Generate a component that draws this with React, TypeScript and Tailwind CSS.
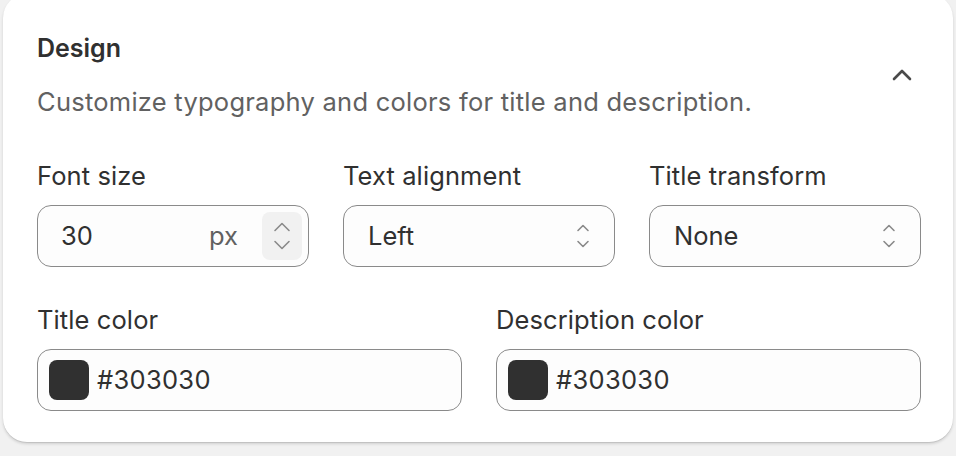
import React from 'react'

const font = { fontFamily: 'Inter, "Noto Sans", sans-serif' }

function UpDown({ className = '' }: { className?: string }) {
  return (
    <svg viewBox="0 0 16 26" className={className} fill="none" stroke="currentColor" strokeWidth={1.6} strokeLinecap="round" strokeLinejoin="round">
      <path d="M3 7.5 8 2.5l5 5" />
      <path d="M3 18.5l5 5 5-5" />
    </svg>
  )
}

function Chevron({ dir }: { dir: 'up' | 'down' }) {
  return (
    <svg viewBox="0 0 18 10" className="h-[10px] w-[18px]" fill="none" stroke="currentColor" strokeWidth={1.6} strokeLinecap="round" strokeLinejoin="round">
      {dir === 'up' ? <path d="M2 8.5 9 1.5l7 7" /> : <path d="M2 1.5l7 7 7-7" />}
    </svg>
  )
}

function Label({ children }: { children: React.ReactNode }) {
  return <div className="h-[32px] text-[25.5px] leading-[32px] tracking-[0.1px] text-[#303030]">{children}</div>
}

function SelectField({ label, value }: { label: string; value: string }) {
  return (
    <div className="flex flex-col gap-[13px]">
      <Label>{label}</Label>
      <div className="flex h-[62px] items-center justify-between rounded-[14px] border border-[#8a8a8a] bg-[#fdfdfd] pl-[24px] pr-[23px]">
        <span className="text-[25.5px] text-[#303030]">{value}</span>
        <UpDown className="h-[26px] w-[16px] text-[#8a8a8a]" />
      </div>
    </div>
  )
}

function ColorField({ label, value }: { label: string; value: string }) {
  return (
    <div className="flex flex-col gap-[13px]">
      <Label>{label}</Label>
      <div className="flex h-[62px] items-center gap-[8px] rounded-[14px] border border-[#8a8a8a] bg-[#fdfdfd] pl-[11px]">
        <span className="h-[40px] w-[40px] rounded-[8px] bg-[#303030]" />
        <span className="text-[25.5px] tracking-[0.3px] text-[#303030]">{value}</span>
      </div>
    </div>
  )
}

export default function App() {
  return (
    <div className="h-[456px] w-[956px] overflow-hidden bg-[#f1f1f1] px-[3px]" style={font}>
      <div className="-mt-[6px] h-[448px] rounded-[24px] bg-white pl-[34px] pr-[32px] pt-[38px] shadow-[0_1px_0_rgba(0,0,0,0.08),0_2px_3px_rgba(0,0,0,0.14)]">
        <div className="flex items-center justify-between">
          <div>
            <div className="h-[32px] text-[25px] font-semibold leading-[32px] text-[#303030]">Design</div>
            <p className="mt-[22px] h-[32px] text-[25.5px] leading-[32px] tracking-[0.25px] text-[#616161]">
              Customize typography and colors for title and description.
            </p>
          </div>
          <div className="mr-[9px] text-[#4a4a4a]">
            <svg viewBox="0 0 20 12" className="h-[12px] w-[20px]" fill="none" stroke="currentColor" strokeWidth={2.6} strokeLinecap="round" strokeLinejoin="round">
              <path d="M2 10 10 2l8 8" />
            </svg>
          </div>
        </div>

        <div className="mt-[42px] grid grid-cols-3 gap-x-[34px]">
          <div className="flex flex-col gap-[13px]">
            <Label>Font size</Label>
            <div className="flex h-[62px] items-center rounded-[14px] border border-[#8a8a8a] bg-[#fdfdfd] pl-[23px] pr-[6px]">
              <span className="flex-1 text-[25.5px] text-[#303030]">30</span>
              <span className="mr-[24px] text-[25.5px] text-[#616161]">px</span>
              <div className="flex h-[48px] w-[40px] flex-col items-center justify-center gap-[8px] rounded-[8px] bg-[#f1f1f1] text-[#8a8a8a]">
                <Chevron dir="up" />
                <Chevron dir="down" />
              </div>
            </div>
          </div>
          <SelectField label="Text alignment" value="Left" />
          <SelectField label="Title transform" value="None" />
        </div>

        <div className="mt-[37px] grid grid-cols-2 gap-x-[34px]">
          <ColorField label="Title color" value="#303030" />
          <ColorField label="Description color" value="#303030" />
        </div>
      </div>
    </div>
  )
}
